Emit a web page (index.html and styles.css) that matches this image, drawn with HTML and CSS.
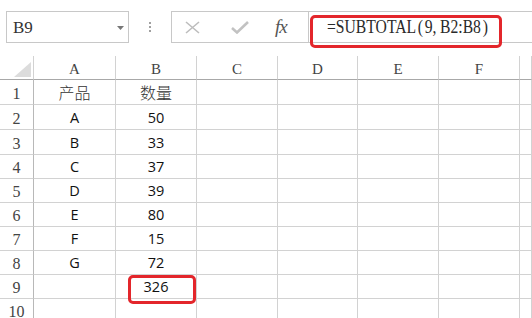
FILE: index.html
```html
<!DOCTYPE html>
<html lang="zh">
<head>
<meta charset="utf-8">
<link rel="stylesheet" href="styles.css">
</head>
<body>
<div class="toolbar">
  <div class="namebox">
    <span class="name">B9</span>
    <svg class="dd" width="7" height="4" viewBox="0 0 7 4"><path d="M0 0H7L3.5 4Z" fill="#777"/></svg>
  </div>
  <div class="grip"><span></span><span></span><span></span></div>
  <div class="fbar">
    <div class="fbtns">
      <svg class="ico-x" width="15" height="13" viewBox="0 0 15 13"><path d="M1 1L14 12M14 1L1 12" stroke="#bdbdbd" stroke-width="1.6" fill="none"/></svg>
      <svg class="ico-ok" width="18" height="13" viewBox="0 0 18 13"><path d="M1 7L6 11.5L17 1" stroke="#c2c2c2" stroke-width="2.6" fill="none"/></svg>
      <span class="fx">fx</span>
    </div>
    <div class="finput">
      <span class="ftext">=SUBTOTAL<span class="p">(</span>9<span class="cm">,</span>B2:B8<span class="p">)</span></span>
      <div class="mark mark-f"></div>
    </div>
  </div>
</div>

<div class="sheet">
  <div class="corner"><svg width="17" height="15" viewBox="0 0 17 15"><path d="M17 0V15H0Z" fill="#dcdcdc"/></svg></div>
  <div class="ch">A</div><div class="ch">B</div><div class="ch">C</div><div class="ch">D</div><div class="ch">E</div><div class="ch">F</div><div class="ch"></div>

  <div class="rh">1</div><div class="c cjk">产品</div><div class="c cjk">数量</div><div class="c"></div><div class="c"></div><div class="c"></div><div class="c"></div><div class="c"></div>
  <div class="rh">2</div><div class="c">A</div><div class="c">50</div><div class="c"></div><div class="c"></div><div class="c"></div><div class="c"></div><div class="c"></div>
  <div class="rh">3</div><div class="c">B</div><div class="c">33</div><div class="c"></div><div class="c"></div><div class="c"></div><div class="c"></div><div class="c"></div>
  <div class="rh">4</div><div class="c">C</div><div class="c">37</div><div class="c"></div><div class="c"></div><div class="c"></div><div class="c"></div><div class="c"></div>
  <div class="rh">5</div><div class="c">D</div><div class="c">39</div><div class="c"></div><div class="c"></div><div class="c"></div><div class="c"></div><div class="c"></div>
  <div class="rh">6</div><div class="c">E</div><div class="c">80</div><div class="c"></div><div class="c"></div><div class="c"></div><div class="c"></div><div class="c"></div>
  <div class="rh">7</div><div class="c">F</div><div class="c">15</div><div class="c"></div><div class="c"></div><div class="c"></div><div class="c"></div><div class="c"></div>
  <div class="rh">8</div><div class="c">G</div><div class="c">72</div><div class="c"></div><div class="c"></div><div class="c"></div><div class="c"></div><div class="c"></div>
  <div class="rh">9</div><div class="c"></div><div class="c sel">326<div class="mark mark-c"></div></div><div class="c"></div><div class="c"></div><div class="c"></div><div class="c"></div><div class="c"></div>
  <div class="rh">10</div><div class="c"></div><div class="c"></div><div class="c"></div><div class="c"></div><div class="c"></div><div class="c"></div><div class="c"></div>
</div>
</body>
</html>
```

FILE: styles.css
```css
html, body {
  margin: 0;
  padding: 0;
  background: #fff;
  overflow: hidden;
}
body {
  width: 532px;
  height: 318px;
  font-family: "Liberation Sans", sans-serif;
}

/* toolbar */
.toolbar {
  display: flex;
  align-items: flex-start;
  padding: 11px 0 0 6px;
  height: 32px;
}
.namebox {
  box-sizing: border-box;
  width: 123px;
  height: 32px;
  border: 1px solid #c8c8c8;
  display: flex;
  align-items: center;
  justify-content: space-between;
  padding: 0 4px 0 6px;
}
.name {
  font-family: "Liberation Serif", serif;
  font-size: 17px;
  color: #333;
  padding-top: 2px;
}
.dd { margin-top: 1px; }
.grip {
  width: 42px;
  height: 32px;
  display: flex;
  flex-direction: column;
  align-items: center;
  justify-content: center;
  gap: 2px;
}
.grip span {
  width: 2px;
  height: 2px;
  background: #a0a0a0;
}
.fbar {
  flex: 1;
  height: 32px;
  box-sizing: border-box;
  border: 1px solid #c8c8c8;
  border-right: none;
  display: flex;
}
.fbtns {
  box-sizing: border-box;
  width: 137px;
  border-right: 1px solid #c8c8c8;
  position: relative;
  display: flex;
  align-items: center;
}
.ico-x { margin-left: 13px; }
.ico-ok { margin-left: 31px; }
.fx {
  margin-left: 26px;
  font-family: "Liberation Serif", serif;
  font-style: italic;
  font-size: 19px;
  color: #555;
  letter-spacing: -1px;
}
.finput {
  flex: 1;
  position: relative;
  display: flex;
  align-items: center;
  padding-left: 18px;
}
.ftext {
  display: inline-block;
  font-family: "Liberation Serif", serif;
  font-size: 18px;
  color: #2a2a2a;
  transform: scaleX(0.87);
  transform-origin: left center;
  white-space: nowrap;
  padding-top: 1px;
}
.ftext .p {
  margin: 0 2px;
}
.ftext .cm {
  margin-right: 4px;
}
.mark {
  position: absolute;
  box-sizing: border-box;
  border: 3px solid #e3262b;
  border-radius: 5px;
}
.mark-f {
  left: 1px;
  top: 3px;
  width: 192px;
  height: 33px;
}

/* sheet */
.sheet {
  margin-top: 13px;
  display: grid;
  grid-template-columns: 34px 82px 81px 81px 80px 81px 81px 1fr;
  grid-template-rows: 24px 25px 25px 25px 24px 24px 24px 24px 24px 24px 24px;
}
.sheet > div {
  box-sizing: border-box;
  border-right: 1px solid #d2d2d2;
  border-bottom: 1px solid #d2d2d2;
  display: flex;
  align-items: center;
  justify-content: center;
}
.sheet > .corner {
  border-bottom: 1px solid #a8a8a8;
  border-right: 1px solid #d2d2d2;
  justify-content: flex-end;
  align-items: flex-end;
  padding: 0 2px 2px 0;
}
.sheet > .ch {
  border-bottom: 1px solid #a8a8a8;
  font-family: "Liberation Serif", serif;
  font-size: 15px;
  color: #444;
  padding-top: 4px;
}
.sheet > .rh {
  border-right: 1px solid #b8b8b8;
  font-family: "Liberation Serif", serif;
  font-size: 16px;
  color: #444;
  padding-top: 3px;
}
.sheet > .c {
  font-family: "Open Sans", "Liberation Sans", sans-serif;
  font-size: 14.5px;
  color: #111;
}
.sheet > .cjk {
  font-family: "Noto Sans CJK SC", sans-serif;
  font-size: 16px;
  color: #333;
  font-weight: 300;
}
.sheet > .sel {
  position: relative;
}
.mark-c {
  left: 12px;
  top: 0;
  width: 68px;
  height: 29px;
}
```
